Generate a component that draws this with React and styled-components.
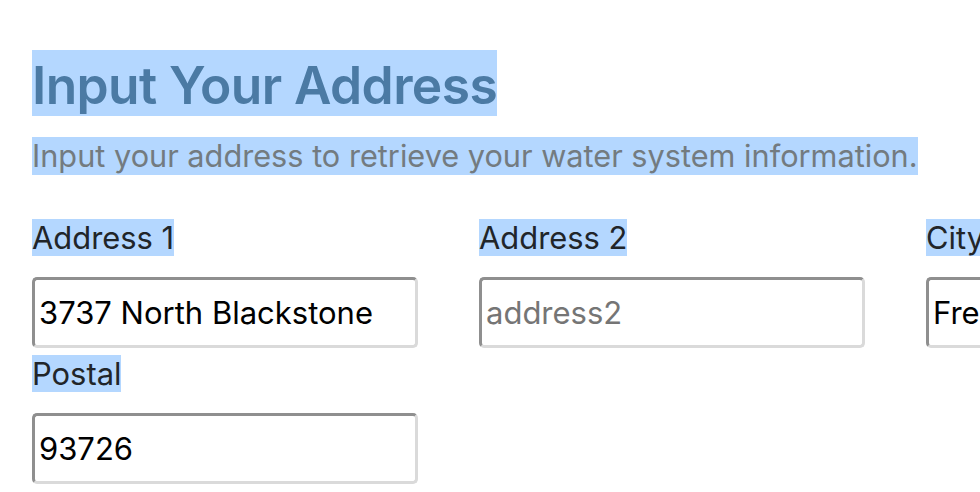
import styled, { createGlobalStyle } from "styled-components";

const GlobalStyle = createGlobalStyle`
  html, body {
    margin: 0;
    padding: 0;
    background: #ffffff;
    overflow: hidden;
  }
  body {
    font-family: Inter, "Noto Sans", sans-serif;
  }
`;

const Page = styled.div`
  padding: 52px 0 0 32px;
  width: 1400px;
`;

// selected-text highlight
const Mark = styled.span`
  background: #b4d7ff;
  padding-top: ${(p) => p.$top || 0}px;
  padding-bottom: ${(p) => p.$bottom || 0}px;
`;

const Title = styled.h1`
  margin: 0;
  font-size: 51.5px;
  font-weight: 600;
  line-height: 67px;
  color: #4b7aa4;
  letter-spacing: -0.6px;
`;

const Lead = styled.p`
  margin: 17px 0 0;
  font-size: 30.7px;
  line-height: 40px;
  color: #737b80;
`;

const Form = styled.div`
  margin-top: 42px;
  display: grid;
  grid-template-columns: repeat(3, 386px);
  column-gap: 61px;
  row-gap: 6px;
`;

const Field = styled.div`
  display: flex;
  flex-direction: column;
  align-items: flex-start;
`;

const Label = styled.label`
  font-size: 30.9px;
  line-height: 40px;
  color: #212529;
  margin-bottom: 19px;
`;

const Input = styled.input`
  box-sizing: border-box;
  width: 386px;
  height: 71px;
  padding: 0 4px;
  font-family: Inter, "Noto Sans", sans-serif;
  font-size: 31px;
  color: #000000;
  background: #ffffff;
  border: 3px solid;
  border-color: #8f8f8f #dadada #dadada #8f8f8f;
  border-radius: 5px;
  outline: none;

  &::placeholder {
    color: #757575;
  }
`;

const fields = [
  { id: "address1", label: "Address 1", value: "3737 North Blackstone" },
  { id: "address2", label: "Address 2", value: "", placeholder: "address2" },
  { id: "city", label: "City", value: "Fresno" },
  { id: "postal", label: "Postal", value: "93726" },
];

export default function App() {
  return (
    <>
      <GlobalStyle />
      <Page>
        <Title>
          <Mark $top={4}>Input Your Address</Mark>
        </Title>
        <Lead>
          <Mark $bottom={1}>
            Input your address to retrieve your water system information.
          </Mark>
        </Lead>
        <Form>
          {fields.map((f) => (
            <Field key={f.id}>
              <Label htmlFor={f.id}>
                <Mark>{f.label}</Mark>
              </Label>
              <Input
                id={f.id}
                defaultValue={f.value}
                placeholder={f.placeholder}
              />
            </Field>
          ))}
        </Form>
      </Page>
    </>
  );
}
